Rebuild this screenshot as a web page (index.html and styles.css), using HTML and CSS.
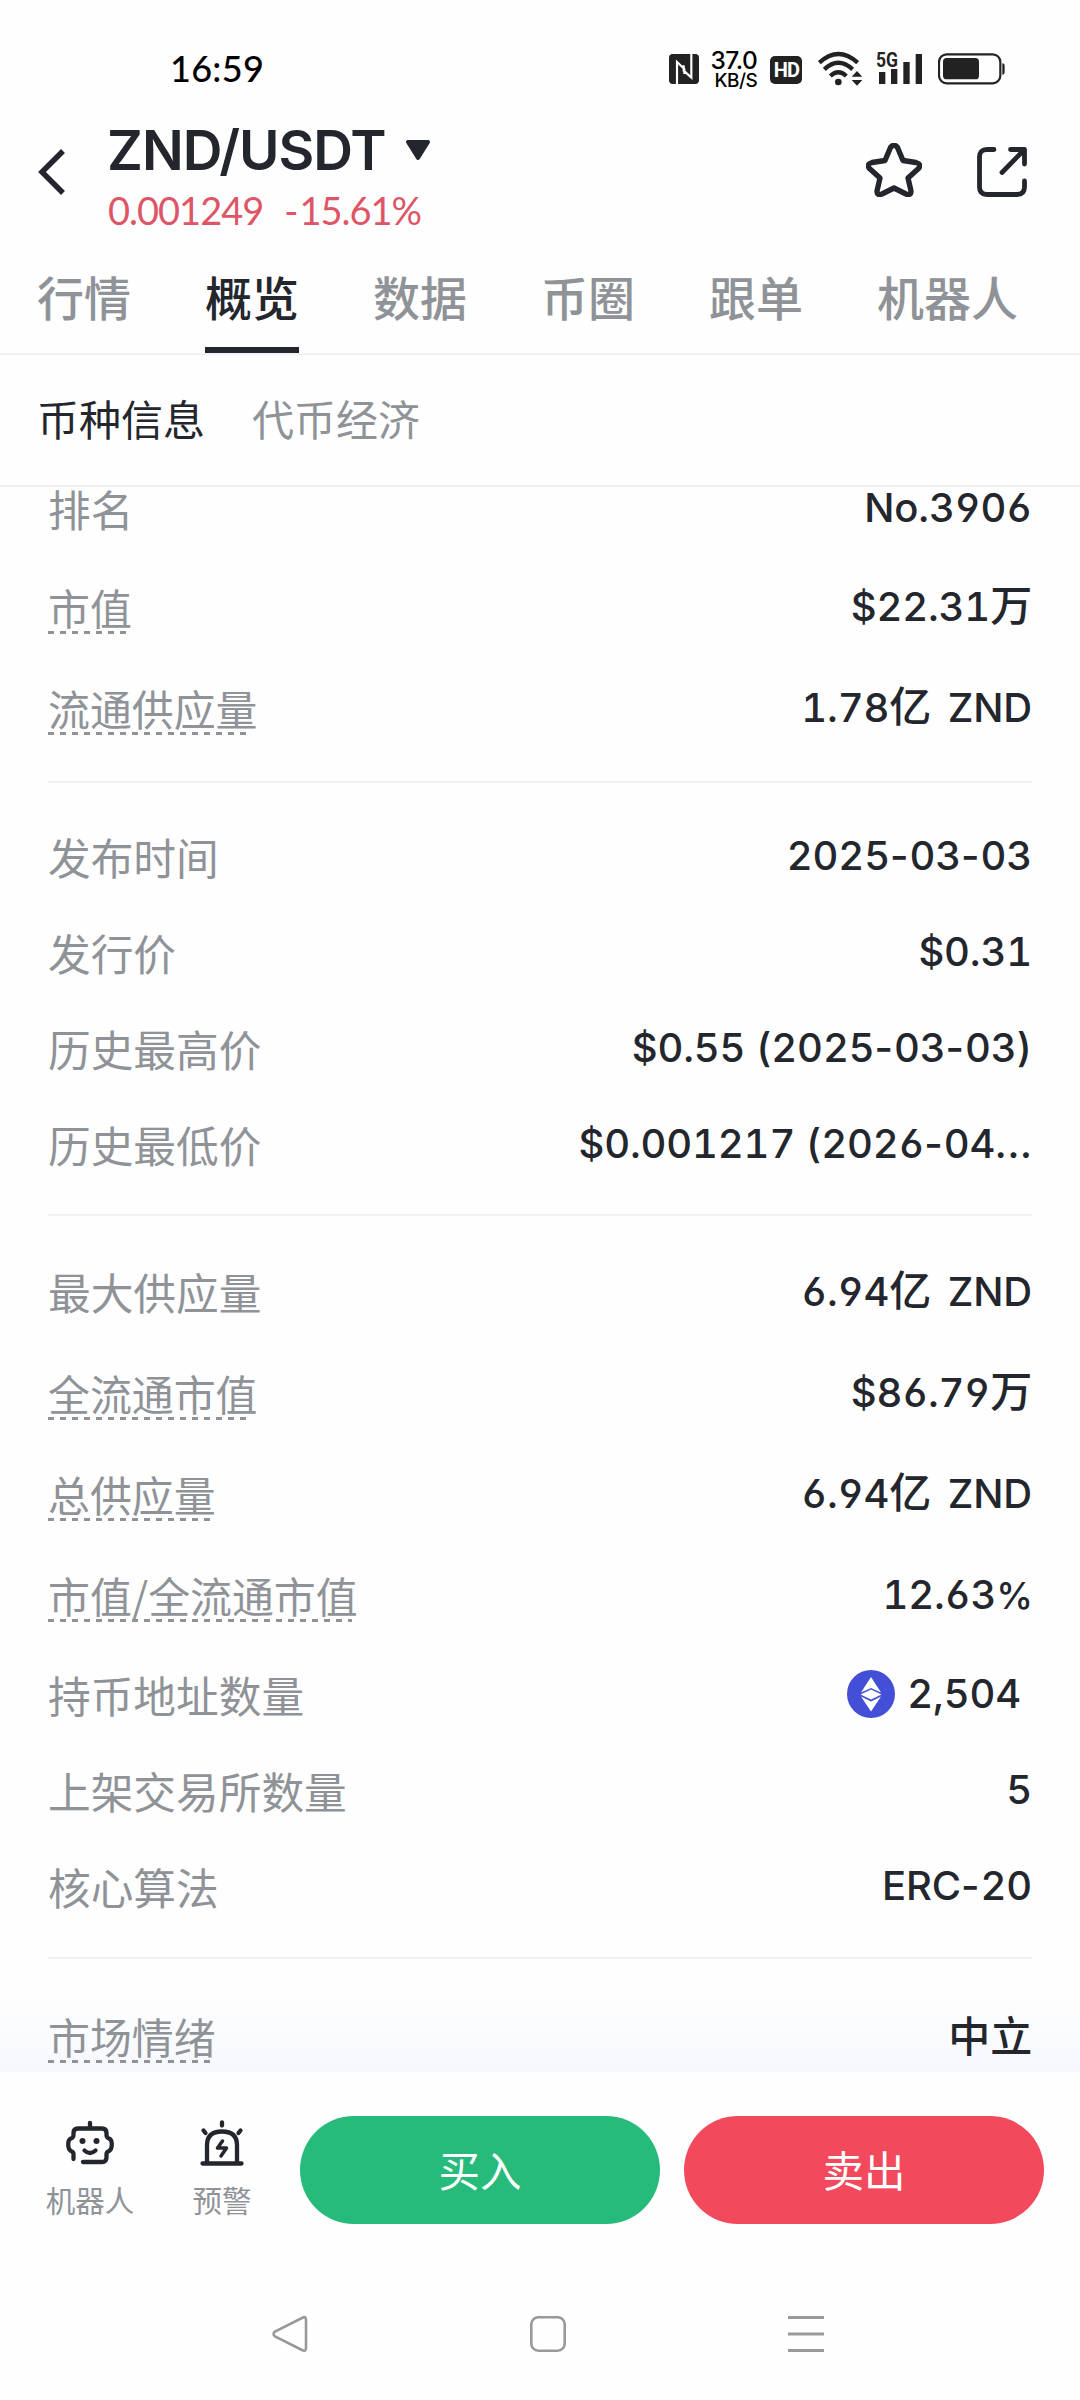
FILE: index.html
```html
<!DOCTYPE html>
<html lang="zh-CN">
<head>
<meta charset="utf-8">
<title>ZND/USDT</title>
<link rel="stylesheet" href="styles.css">
</head>
<body>
<div class="status">
  <span class="clock">16:59</span>
  <div class="status-icons">
    <svg class="nfc" viewBox="0 0 90 90"><rect width="90" height="90" rx="11" fill="#222"/><path d="M24 90V24L46 45V60M67 0V71L44 50V34" fill="none" stroke="#fff" stroke-width="6.500"/></svg>
    <span class="speed"><b>37.0</b><i>KB/S</i></span>
    <span class="hd">HD</span>
    <svg class="wifi" viewBox="534 62 134 105"><g fill="none" stroke="#222" stroke-width="13"><path d="M538 97Q595 45 653 97"/><path d="M553 117Q595 77 638 117"/><path d="M571 137Q595 115 619 137"/></g><circle cx="595" cy="155" r="10" fill="#222"/><path d="M635 139L651 122L667 139ZM635 149H667L651 166Z" fill="#222"/></svg>
    <svg class="signal" viewBox="708 60 138 105"><text class="net" x="708" y="111" textLength="66" lengthAdjust="spacingAndGlyphs">5G</text><path d="M717 126h19v36h-19zM753 117h19v45h-19zM790 96h19v66h-19zM827 72h19v90h-19z" fill="#222"/></svg>
    <svg class="battery" viewBox="894 68 201 95"><rect x="897" y="72" width="184" height="87" rx="23" fill="none" stroke="#222" stroke-width="6.500"/><rect x="909" y="83" width="108" height="64" rx="11" fill="#222"/><path d="M1087 99q7 0 7 8v18q0 8-7 8z" fill="#222"/></svg>
  </div>
</div>

<header class="header">
  <svg class="back" viewBox="0 0 28 46"><path d="M25 2L4 23L25 44" fill="none" stroke="#24262d" stroke-width="5.500"/></svg>
  <div class="pair">
    <div class="pair-name">ZND/USDT<svg class="caret" viewBox="0 0 26 21"><path d="M3 2H23L13 18Z" fill="#24262d" stroke="#24262d" stroke-width="4" stroke-linejoin="round"/></svg></div>
    <div class="quote"><span>0.001249</span><span><span class="minus">-</span>15.61%</span></div>
  </div>
  <svg class="star" viewBox="0 0 56 54"><path d="M24.500 4.500Q28 0 31.500 4.500L37 17.500L50 19.500Q56 21 52.500 25.500L42 35L45 48Q45 53 40 51L28 45L16 51Q11 53 11 48L14 35L3.500 25.500Q0 21 6 19.500L19 17.500Z" fill="none" stroke="#24262d" stroke-width="5.400" stroke-linejoin="round"/></svg>
  <svg class="share" viewBox="0 0 50 50"><path d="M17 2.500H10Q2.500 2.500 2.500 10V40Q2.500 47.500 10 47.500H40Q47.500 47.500 47.500 40V34M33.500 2.500H47.500V17M46 4L25 25.500" fill="none" stroke="#24262d" stroke-width="4.800" stroke-linecap="round" stroke-linejoin="round"/></svg>
</header>

<nav class="tabs">
  <span>行情</span><span class="on">概览</span><span>数据</span><span>币圈</span><span>跟单</span><span>机器人</span>
</nav>
<nav class="subtabs"><span class="on">币种信息</span><span>代币经济</span></nav>

<main class="content">
  <section class="group first">
    <div class="row"><span class="label">排名</span><span class="value">No.3906</span></div>
    <div class="row tall"><span class="label tip">市值</span><span class="value">$22.31<span class="zh">万</span></span></div>
    <div class="row tall"><span class="label tip">流通供应量</span><span class="value coin">1.78<span class="zh">亿</span> ZND</span></div>
  </section>
  <section class="group issue">
    <div class="row"><span class="label">发布时间</span><span class="value">2025<span class="sym">-</span>03<span class="sym">-</span>03</span></div>
    <div class="row"><span class="label">发行价</span><span class="value">$0.31</span></div>
    <div class="row"><span class="label">历史最高价</span><span class="value">$0.55 (2025<span class="sym">-</span>03<span class="sym">-</span>03)</span></div>
    <div class="row"><span class="label">历史最低价</span><span class="value">$0.001217 (2026<span class="sym">-</span>04<span class="dots">...</span></span></div>
  </section>
  <section class="group supply">
    <div class="row tall"><span class="label raised">最大供应量</span><span class="value coin">6.94<span class="zh">亿</span> ZND</span></div>
    <div class="row tall"><span class="label tip">全流通市值</span><span class="value">$86.79<span class="zh">万</span></span></div>
    <div class="row tall"><span class="label tip">总供应量</span><span class="value coin">6.94<span class="zh">亿</span> ZND</span></div>
    <div class="row tall"><span class="label tip">市值/全流通市值</span><span class="value">12.63<span class="pct">%</span></span></div>
    <div class="row"><span class="label">持币地址数量</span><span class="value holders"><svg class="eth" viewBox="0 0 48 48"><circle cx="24" cy="24" r="24" fill="#434fd6"/><path d="M24 7L34 22.500L24 18L14 22.500ZM24 19.500L34.500 24.500L24 29.500L13.500 24.500ZM14 26.500L24 31.500L34 26.500L24 41.500Z" fill="#fff"/></svg>2,504</span></div>
    <div class="row"><span class="label">上架交易所数量</span><span class="value">5</span></div>
    <div class="row"><span class="label">核心算法</span><span class="value">ERC<span class="sym">-</span>20</span></div>
  </section>
  <section class="group mood">
    <div class="row tall"><span class="label tip">市场情绪</span><span class="value"><span class="zh">中立</span></span></div>
  </section>
</main>

<footer class="actions">
  <div class="tool bot">
    <svg viewBox="0 0 48 46"><g fill="none" stroke="#24262d" stroke-width="4.300" stroke-linecap="round" stroke-linejoin="round"><path d="M24 3V8M7.500 39V34Q7.500 32 5 31Q2.200 29.500 2.200 24Q2.200 19.500 5 18.500Q7.500 17.500 7.500 15V13Q7.500 8.500 12 8.500H36Q40.500 8.500 40.500 13V15Q40.500 17.500 43 18.500Q45.800 19.500 45.800 24Q45.800 29.500 43 31Q40.500 32 40.500 34V37Q40.500 42 36 42H17"/><path d="M18.500 30.500Q24 35.500 29.500 30.500"/></g><circle cx="16.500" cy="21" r="3" fill="#24262d"/><circle cx="30.500" cy="21" r="3" fill="#24262d"/></svg>
    <span>机器人</span>
  </div>
  <div class="tool alert">
    <svg viewBox="0 0 44 46"><g fill="none" stroke="#24262d" stroke-width="4.300" stroke-linecap="round" stroke-linejoin="round"><path d="M2.500 43.500H41.500M7 43V25Q7 11.500 22 11.500Q37 11.500 37 25V43M22 2.500V5.500M3.500 10.500L5.500 13M40.500 10.500L38.500 13"/><path d="M22.500 21L17.500 28H26.500L21 36" stroke-width="3.500"/></g></svg>
    <span>预警</span>
  </div>
  <div class="btn buy">买入</div>
  <div class="btn sell">卖出</div>
</footer>

<div class="sysnav">
  <svg viewBox="0 0 38 38"><path d="M31 3Q35 .5 35 5V33Q35 37 31 35L4 21.500Q1 19 4 16.500Z" fill="none" stroke="#999" stroke-width="2.600"/></svg>
  <svg viewBox="0 0 38 38"><rect x="2.300" y="2.300" width="33.400" height="33.400" rx="7" fill="none" stroke="#999" stroke-width="2.600"/></svg>
  <svg viewBox="0 0 38 38"><path d="M1 2.500H37M1 19H37M1 35.500H37" stroke="#999" stroke-width="3"/></svg>
</div>
</body>
</html>
```
FILE: styles.css
```css
* { box-sizing: border-box; }
body {
  margin: 0; width: 1080px; height: 2400px; overflow: hidden;
  background: #fefefe; color: #24262d;
  display: flex; flex-direction: column;
  font-family: "Noto Sans CJK SC", sans-serif;
}
svg { display: block; flex: none; }

.status { height: 112px; padding: 26px 75px 0 170px; display: flex; justify-content: space-between; align-items: flex-start; color: #000; }
.clock { font: 500 36px/84px Lato, sans-serif; letter-spacing: 0.3px; }
.status-icons { display: flex; padding-top: 24px; height: 64px; }
.nfc { width: 30px; height: 30px; margin: 4px 14px 0 0; }
.speed { width: 44px; display: flex; flex-direction: column; align-items: flex-end; white-space: nowrap; }
.speed b { font: 500 24.500px/21px Inter, sans-serif; letter-spacing: -0.5px; }
.speed i { font: 500 19px/19px Inter, sans-serif; letter-spacing: -0.5px; }
.hd { width: 32px; height: 28px; margin: 6px 16px 0 13px; border-radius: 5px; background: #222; color: #fff; font: 700 20px/28px Roboto, sans-serif; text-align: center; letter-spacing: -1px; }
.wifi { width: 44.667px; height: 35px; margin: 1px 13px 0 0; }
.signal { width: 46px; height: 35px; margin-right: 16px; overflow: visible; }
.net { font: 700 60px Roboto, sans-serif; fill: #222; }
.battery { width: 67px; height: 31.667px; margin-top: 3px; }

.header { height: 136px; padding: 0 53px 0 38px; display: flex; align-items: flex-start; }
.back { width: 28px; height: 46px; margin-top: 37px; }
.pair { margin-left: 42px; flex: 1; }
.pair-name { display: flex; align-items: center; font: 600 55px/72px Inter, sans-serif; letter-spacing: -1px; height: 76px; margin-left: -1px; }
.caret { width: 26px; height: 21px; margin-left: 19px; }
.quote { display: flex; gap: 21px; font: 400 38px/44px Lato, sans-serif; letter-spacing: -1px; color: #dd5566; }
.minus { letter-spacing: 1px; }
.star { width: 56px; height: 54px; margin: 31px 55px 0 0; }
.share { width: 50px; height: 50px; margin-top: 35px; }

.tabs { height: 107px; padding: 10px 37px 0; display: flex; gap: 74px; border-bottom: 2px solid #f1f2f3; font-size: 47px; line-height: 75px; color: #8f9398; font-weight: 500; }
.tabs span { height: 95px; white-space: nowrap; }
.tabs .on { color: #24262d; border-bottom: 6px solid #24262d; }
.subtabs { height: 132px; padding: 0 37px; display: flex; gap: 47px; border-bottom: 2px solid #f0f0f2; font-size: 42px; line-height: 125px; color: #8f9398; }
.subtabs .on { color: #24262d; }

.content { height: 1585px; overflow: hidden; display: flex; flex-direction: column; justify-content: flex-end; background: linear-gradient(to bottom, #fefefe 1505px, #f6f8fc 1585px); }
.group { margin: 0 48px; padding: 23px 0 24px; border-bottom: 2px solid #f1f2f3; flex: none; }
.first { padding: 0 0 23px; }
.issue { padding: 25px 0 22px; }
.supply { padding: 25px 0 23px; }
.mood { padding: 28px 0 0; border: 0; margin-bottom: -16px; }
.row { height: 96px; display: flex; justify-content: space-between; align-items: center; }
.tall { height: 101px; }
.supply .tall { height: 101.250px; }
.label { font-size: 42.700px; line-height: 60px; color: #8f9398; }
.raised { padding-bottom: 2px; }
.tip { font-size: 41.900px; height: 60px; }
.tip::after { content: ""; display: block; height: 3px; margin: -6px 6px 0 0; background: repeating-linear-gradient(to right, #8f9398 0 6px, transparent 6px 12px); }
.mood .tip { line-height: 55px; }
.mood .tip::after { margin-top: -3px; }
.value { font: 500 40px/60px Inter, "Noto Sans CJK SC", sans-serif; font-feature-settings: "tnum", "cv03", "cv04"; white-space: pre; letter-spacing: -0.150px; }
.coin { word-spacing: 6px; }
.zh { font-size: 42px; line-height: 1; }
.sym { font-feature-settings: "tnum" 0; letter-spacing: 1px; }
.pct { font-size: 37px; font-feature-settings: "tnum" 0; letter-spacing: -1px; }
.dots { letter-spacing: 1.800px; margin-right: -1px; }
.holders { display: flex; align-items: center; gap: 12px; margin-right: 11px; }
.eth { width: 48px; height: 48px; }

.actions { height: 212px; padding: 44px 36px 0 44px; display: flex; }
.tool { display: flex; flex-direction: column; align-items: center; width: 92px; font-size: 29.500px; line-height: 40px; color: #8f9398; }
.tool svg { height: 46px; margin: 4px 0 13px; }
.bot svg { width: 48px; }
.alert { margin-left: 40px; }
.alert svg { width: 44px; }
.btn { width: 360px; height: 108px; border-radius: 54px; color: #fff; font-size: 41.500px; line-height: 107px; text-align: center; }
.buy { background: #26ba7b; margin-left: 32px; }
.sell { background: #f2495c; margin-left: 24px; }

.sysnav { flex: 1; padding: 31px 255px 0 271px; display: flex; justify-content: space-between; }
.sysnav svg { width: 38px; height: 38px; }
```
